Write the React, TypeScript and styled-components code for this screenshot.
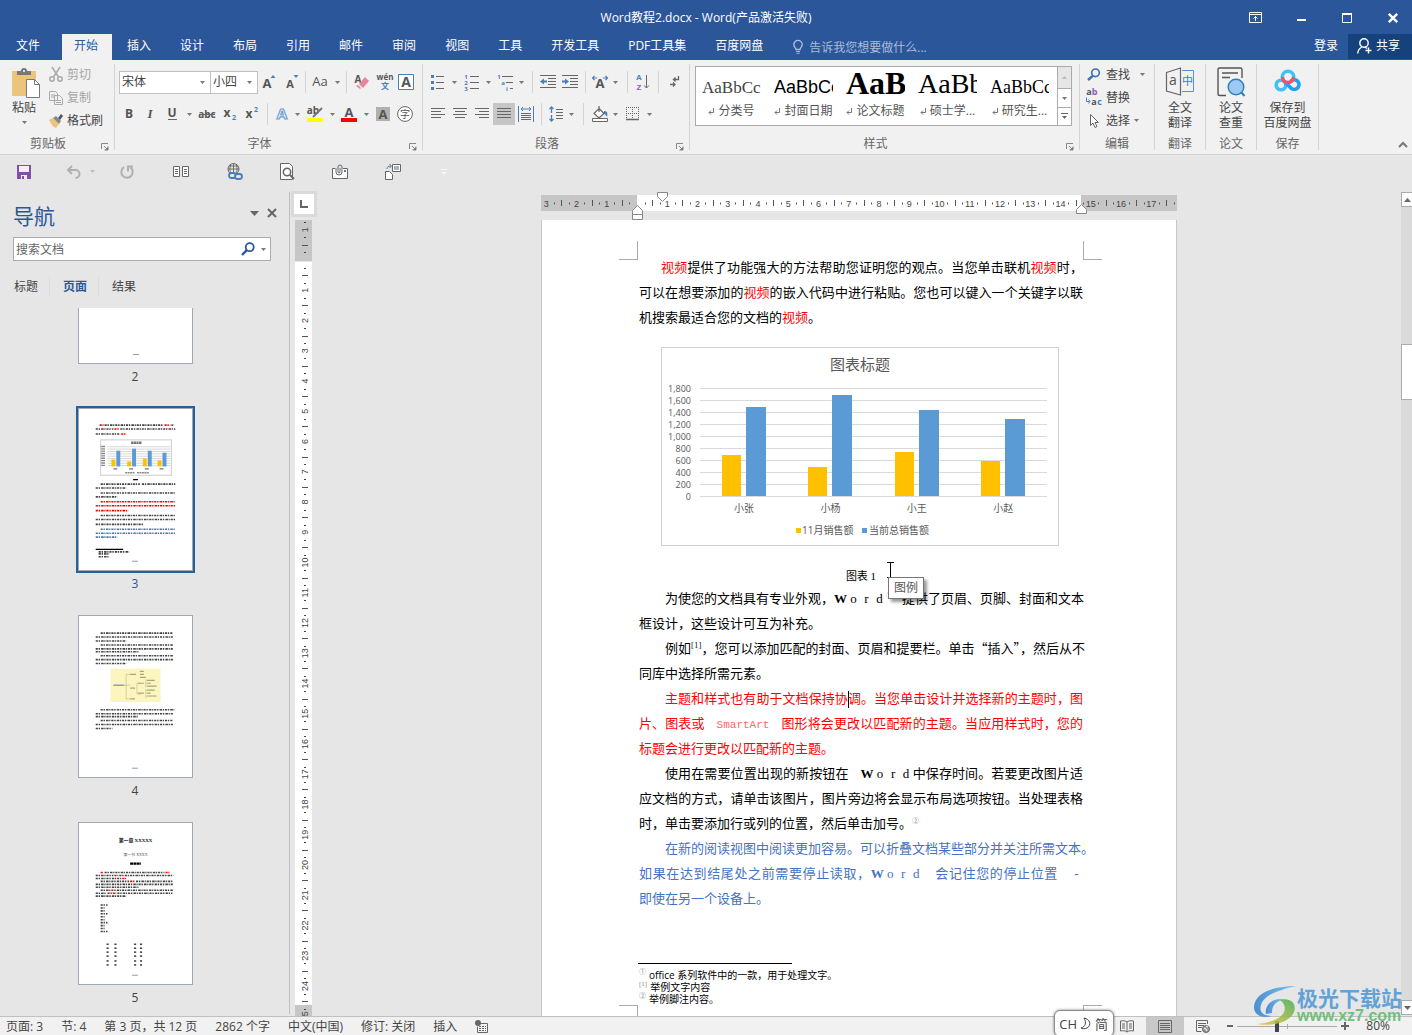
import React from "react";
import styled, { createGlobalStyle, css } from "styled-components";

const UI = `"Open Sans", "Noto Sans CJK SC", sans-serif`;
const BLUE = "#2b579a";

const Global = createGlobalStyle`
  * { box-sizing: border-box; }
  body { margin: 0; background: #e6e6e6; font: 12px/16px ${UI}; color: #444; overflow: hidden; }
  button, input, select { font: inherit; color: inherit; }
  button { border: 0; padding: 0; background: none; display: flex; align-items: center; justify-content: center; white-space: nowrap; }
  svg { display: block; flex: none; }
  h1, h2, p, ul { margin: 0; padding: 0; font-weight: 400; }
`;

const Shell = styled.div`
  position: relative;
  height: 100vh;
  display: flex;
  flex-direction: column;
  overflow: hidden;
`;

/* ---------- title bar and tabs ---------- */
const TitleBar = styled.header`
  height: 34px;
  flex: none;
  display: grid;
  grid-template-columns: 1fr auto 1fr;
  align-items: center;
  background: ${BLUE};
  color: #fff;
  h1 { font-size: 12px; line-height: 34px; padding-top: 1px; }
`;
const WindowButtons = styled.div`
  display: flex;
  justify-content: flex-end;
  button { width: 46px; height: 32px; }
  button:last-child { width: 42px; padding-left: 4px; }
`;
const TabBar = styled.nav`
  height: 26px;
  flex: none;
  display: flex;
  align-items: stretch;
  background: ${BLUE};
  color: #fff;
`;
const Tabs = styled.div`
  display: flex;
  gap: 3px;
  margin-left: 4px;
`;
const Tab = styled.button<{ $active?: boolean; $file?: boolean }>`
  padding: 0 14px 2px 12px;
  ${(p) => p.$file && css`padding-right: 19px;`}
  ${(p) => p.$active && css`background: #f1f1f1; color: ${BLUE};`}
`;
const TellMe = styled.label`
  display: flex;
  align-items: center;
  gap: 6px;
  margin-left: 16px;
  flex: 1;
  input { border: 0; background: none; padding: 0; width: 160px; height: 20px; outline: 0; }
  input::placeholder { color: #a9bcd9; opacity: 1; }
`;
const Login = styled.button`
  padding: 0 10px 2px;
`;
const Share = styled.button`
  width: 64px;
  height: 25px;
  gap: 4px;
  padding: 0 10px 2px 7px;
  background: #15417c;
`;

/* ---------- ribbon ---------- */
const Ribbon = styled.section`
  height: 95px;
  flex: none;
  display: flex;
  align-items: stretch;
  padding: 4px 0;
  background: #f1f1f1;
  border-bottom: 1px solid #d2d2d2;
`;
const Group = styled.div<{ $w: number }>`
  width: ${(p) => p.$w}px;
  flex: none;
  display: flex;
  flex-direction: column;
  border-right: 1px solid #d4d4d4;
`;
const GroupBody = styled.div<{ $pad?: number; $row?: boolean }>`
  flex: 1;
  display: flex;
  flex-direction: ${(p) => (p.$row ? "row" : "column")};
  padding-left: ${(p) => p.$pad ?? 0}px;
`;
const GroupLabel = styled.div`
  height: 16px;
  margin-bottom: -2px;
  display: flex;
  align-items: center;
  text-align: center;
  white-space: nowrap;
  color: #666;
  span { flex: 1; }
  button { align-self: flex-end; width: 18px; height: 10px; }
`;
const ToolRow = styled.div<{ $top: number }>`
  display: flex;
  align-items: center;
  height: 24px;
  margin-top: ${(p) => p.$top}px;
`;
const Tool = styled.button<{ $w: number; $on?: boolean }>`
  width: ${(p) => p.$w}px;
  height: 22px;
  flex: none;
  background: ${(p) => (p.$on ? "#c6c6c6" : "none")};
`;
const Sep = styled.span<{ $w: number }>`
  width: ${(p) => p.$w}px;
  height: 22px;
  flex: none;
  background: linear-gradient(#d4d4d4, #d4d4d4) center / 1px 100% no-repeat;
`;
const PickWrap = styled.label<{ $w: number }>`
  width: ${(p) => p.$w}px;
  height: 23px;
  flex: none;
  display: flex;
  align-items: center;
  margin-right: -1px;
  padding-right: 5px;
  border: 1px solid #c0c0c0;
  background: #fff;
  select {
    appearance: none;
    flex: 1;
    min-width: 0;
    height: 20px;
    border: 0;
    padding: 0 2px;
    background: none;
    outline: 0;
  }
`;
const PasteButton = styled.button`
  width: 28px;
  margin-left: 12px;
  flex-direction: column;
  justify-content: flex-start;
  padding-top: 4px;
  span { margin: 2px 4px 5px 0; }
  svg + span + svg { margin-right: 4px; }
`;
const SmallList = styled.div<{ $left: number }>`
  display: flex;
  flex-direction: column;
  margin-left: ${(p) => p.$left}px;
`;
const SmallButton = styled.button<{ $dim?: boolean }>`
  height: 23px;
  justify-content: flex-start;
  gap: 4px;
  color: ${(p) => (p.$dim ? "#a6a6a6" : "#444")};
  &:first-child { margin-top: -1px; }
`;
const BigButton = styled.button`
  width: 100%;
  flex-direction: column;
  justify-content: flex-start;
  padding-top: 3px;
  line-height: 15px;
  svg { margin-bottom: 3px; }
`;
const Gallery = styled.div`
  display: flex;
  width: 377px;
  height: 60px;
  margin: 2px 0 0 5px;
  border: 1px solid #ababab;
  background: #fff;
`;
const StyleCards = styled.div`
  flex: 1;
  display: grid;
  grid-template-columns: repeat(5, 72px);
  padding-left: 1px;
`;
const StyleCard = styled.button`
  height: 58px;
  flex-direction: column;
  justify-content: flex-start;
  align-items: stretch;
  padding: 0 8px 0 5px;
  color: #555;
`;
const Sample = styled.span<{ $size: number; $face: string; $bold?: boolean; $soft?: boolean }>`
  display: block;
  height: 36px;
  overflow: hidden;
  text-align: left;
  font: ${(p) => (p.$bold ? 700 : 400)} ${(p) => p.$size}px/1 ${(p) => p.$face};
  color: ${(p) => (p.$soft ? "#444" : "#000")};
  &::before { content: ""; display: inline-block; height: 26px; }
`;
const StyleName = styled.span`
  display: flex;
  align-items: center;
  justify-content: center;
  gap: 4px;
`;
const GalleryScroll = styled.div`
  width: 15px;
  display: grid;
  grid-template-rows: 21px 19px 18px;
  border-left: 1px solid #ababab;
  button + button { border-top: 1px solid #ababab; }
  button:first-child { background: #e6e6e6; }
`;
const Collapse = styled.button`
  margin: 0 4px 2px auto;
  align-self: flex-end;
`;

const QuickBar = styled.div`
  height: 35px;
  flex: none;
  display: flex;
  align-items: center;
  padding-bottom: 2px;
`;
const QuickButton = styled.button<{ $w: number; $split?: boolean }>`
  width: ${(p) => p.$w}px;
  height: 24px;
  ${(p) => p.$split && css`justify-content: flex-start; gap: 8px; padding-left: 18px;`}
`;

/* ---------- workspace ---------- */
const Workspace = styled.main`
  flex: 1;
  min-height: 0;
  display: flex;
`;
const NavPane = styled.aside`
  width: 290px;
  flex: none;
  display: flex;
  flex-direction: column;
  margin: 2px 0;
  border-right: 1px solid #c0c0c0;
`;
const NavHead = styled.div`
  height: 45px;
  display: flex;
  align-items: center;
  gap: 8px;
  padding: 0 12px 3px 13px;
  h2 { flex: 1; font-size: 21px; line-height: 28px; color: ${BLUE}; padding-top: 5px; }
`;
const SearchBox = styled.div`
  height: 24px;
  margin: 0 18px 0 13px;
  display: flex;
  align-items: center;
  gap: 6px;
  padding: 0 4px 0 2px;
  border: 1px solid #ababab;
  background: #fff;
  input { flex: 1; min-width: 0; height: 20px; padding: 0; border: 0; outline: 0; background: none; }
  input::placeholder { color: #666; opacity: 1; }
`;
const NavTabs = styled.div`
  display: flex;
  margin: 16px 0 11px 14px;
`;
const NavTab = styled.button<{ $on?: boolean }>`
  width: 49px;
  height: 20px;
  justify-content: flex-start;
  background: linear-gradient(#dcdcdc, #dcdcdc) 35px 0 / 1px 100% no-repeat;
  color: ${(p) => (p.$on ? BLUE : "#444")};
  font-weight: ${(p) => (p.$on ? 700 : 400)};
  &:last-child { background: none; }
`;
const ThumbList = styled.ul`
  flex: 1;
  min-height: 0;
  overflow: hidden;
  list-style: none;
  padding-right: 19px;
`;
const Thumb = styled.li<{ $on?: boolean }>`
  display: flex;
  flex-direction: column;
  align-items: center;
  height: 207px;
  color: ${(p) => (p.$on ? BLUE : "#444")};
  line-height: 26px;
  &:first-child { height: 100px; }
`;
const ThumbPage = styled.div<{ $on?: boolean; $cut?: boolean }>`
  width: 115px;
  height: ${(p) => (p.$cut ? 56 : 163)}px;
  flex: none;
  border: 1px solid #a0a8b4;
  background: #fff;
  ${(p) => p.$cut && css`border-top: 0; display: flex; align-items: flex-end;`}
  ${(p) => p.$on && css`outline: 2px solid #2a6099;`}
`;
const RulerColumn = styled.div`
  width: 27px;
  flex: none;
  display: flex;
  flex-direction: column;
  align-items: flex-start;
  overflow: hidden;
  padding-left: 1px;
`;
const TabStop = styled.button`
  width: 26px;
  height: 26px;
  margin: 1px 0 3px;
  border: 3px solid #dadada;
  background: #fff;
  flex: none;
`;
const RulerClip = styled.div`
  margin-left: 4px;
  flex: 1;
  min-height: 0;
  overflow: hidden;
`;
const Canvas = styled.section`
  flex: 1;
  min-width: 0;
  display: flex;
  flex-direction: column;
  align-items: center;
  overflow: hidden;
`;
const Page = styled.article`
  position: relative;
  width: 636px;
  flex: 1;
  min-height: 0;
  padding: 34px 93px 0 97px;
  border: solid #c6c6c6;
  border-width: 0 1px;
  background: #fff;
  color: #000;
  overflow: hidden;
  font: 13px/25px "Liberation Serif", "Noto Sans CJK SC", serif;
`;
const Crop = styled.i<{ $x: "left" | "right"; $y: "top" | "bottom" }>`
  position: absolute;
  width: 19px;
  height: ${(p) => (p.$y === "top" ? 19 : 11)}px;
  ${(p) => (p.$x === "left" ? "left: 77px; border-right: 1px solid #aaa;" : "right: 74px; border-left: 1px solid #aaa;")}
  ${(p) => (p.$y === "top" ? "top: 21px; border-bottom: 1px solid #aaa;" : "bottom: 0; border-top: 1px solid #aaa;")}
`;
const Para = styled.p<{ $color?: string }>`
  font-family: "Noto Sans CJK SC", sans-serif;
  color: ${(p) => p.$color ?? "#000"};
`;
const Line = styled.span<{ $indent?: number; $full?: boolean }>`
  display: block;
  height: 25px;
  white-space: nowrap;
  padding-left: ${(p) => p.$indent ?? 0}px;
  text-align: left;
  text-align-last: ${(p) => (p.$full ? "justify" : "left")};
`;
const Red = styled.span`
  color: #f00;
`;
const Cell = styled.span`
  display: inline-block;
  width: 13px;
  text-align: center;
  text-align-last: center;
  font-family: "Liberation Serif", serif;
`;
const Blank = styled.span<{ $narrow?: boolean }>`
  display: inline-block;
  width: ${(p) => (p.$narrow ? 9 : 12)}px;
`;
const Mono = styled.span`
  font-family: "Liberation Mono", monospace;
  font-size: 11px;
  color: #f66;
`;
const Mark = styled.sup<{ $dark?: boolean }>`
  font-size: ${(p) => (p.$dark ? 9 : 7)}px;
  line-height: 0;
  color: ${(p) => (p.$dark ? "#222" : "#888")};
  font-family: "Liberation Serif", "Noto Sans CJK SC", serif;
`;
const TextCaret = styled.span`
  display: inline-block;
  width: 1px;
  height: 17px;
  margin-right: -1px;
  background: #000;
  vertical-align: middle;
`;
const Figure = styled.figure`
  margin: 18px 0 0;
  figcaption {
    margin-top: 21px;
    text-align: center;
    font-size: 11px;
    line-height: 18px;
  }
  svg { margin-left: 22px; }
`;
const Footnotes = styled.div`
  margin-top: 53px;
  font: 10px/12px "Open Sans", "Noto Sans CJK SC", sans-serif;
  &::before {
    content: "";
    display: block;
    width: 154px;
    margin: 0 0 5px -1px;
    border-top: 1px solid #000;
  }
  p { display: flex; gap: 3px; }
  sup { line-height: 7px; }
`;
const Tooltip = styled.div`
  position: absolute;
  left: 346px;
  top: 357px;
  padding: 0 5px;
  border: 1px solid #767676;
  background: #fff;
  box-shadow: 3px 3px 3px rgba(0, 0, 0, 0.4);
  font: 12px/20px ${UI};
  color: #575757;
`;
const Pointer = styled.svg`
  position: absolute;
  left: 344px;
  top: 342px;
`;
const ScrollBar = styled.div`
  width: 11px;
  flex: none;
  margin: 2px 0 1px;
  display: flex;
  flex-direction: column;
  background: #dadada;
  button { width: 14px; height: 15px; border: 1px solid #ababab; background: #fff; padding-right: 1px; }
`;
const ScrollSpace = styled.div<{ $grow: number }>`
  flex: ${(p) => p.$grow} 1 0;
`;
const ScrollThumb = styled.div`
  width: 14px;
  height: 56px;
  border: 1px solid #ababab;
  background: #fff;
`;

/* ---------- status bar ---------- */
const StatusBar = styled.footer`
  height: 19px;
  flex: none;
  display: flex;
  align-items: center;
  padding: 0 22px 0 6px;
  border-top: 1px solid #c0c0c0;
  background: #f1f1f1;
`;
const StatusItems = styled.div`
  flex: 1;
  display: flex;
  align-items: center;
  white-space: nowrap;
  padding-top: 1px;
  gap: 18px;
`;
const ViewButton = styled.button<{ $on?: boolean }>`
  width: 38px;
  height: 18px;
  background: ${(p) => (p.$on ? "#c8c8c8" : "none")};
`;
const ZoomStep = styled.button<{ $gap: number }>`
  width: 10px;
  height: 16px;
  margin-left: ${(p) => p.$gap}px;
`;
const ZoomRange = styled.input`
  appearance: none;
  width: 100px;
  height: 12px;
  margin: 0 -3px 0 2px;
  background:
    linear-gradient(#aaa, #aaa) 50% 50% / 1px 5px no-repeat,
    linear-gradient(#aaa, #aaa) 0 50% / 100% 1px no-repeat;
  &::-webkit-slider-thumb { appearance: none; width: 4px; height: 11px; background: #444; }
`;
const ZoomValue = styled.span`
  width: 40px;
  text-align: right;
`;
const Ime = styled.div`
  position: absolute;
  right: 298px;
  bottom: -2px;
  height: 27px;
  display: flex;
  align-items: center;
  gap: 3px;
  padding: 0 5px 0 4px;
  border: 1px solid #8c8c8c;
  border-radius: 6px;
  background: #fff;
  box-shadow: 0 0 3px rgba(0, 0, 0, 0.5);
  font-size: 13px;
`;
const Watermark = styled.div`
  position: absolute;
  right: 10px;
  bottom: 8px;
  display: flex;
  align-items: center;
  opacity: 0.85;
  div { display: flex; flex-direction: column; }
  strong { font: 700 21px/20px "Noto Sans CJK SC", sans-serif; color: #4b97d6; }
  em { font: 700 16px/18px "Liberation Sans", sans-serif; color: #5cba6c; }
`;

/* ---------- icons ---------- */
const G = "#666";
const B = "#4a7fb5";
const Svg = ({ w = 16, h = 16, children, ...rest }: any) => (
  <svg width={w} height={h} viewBox={`0 0 ${w} ${h}`} fill="none" stroke={G} overflow="visible" aria-hidden="true" {...rest}>
    {children}
  </svg>
);
const Caret = ({ c = "#777" }: { c?: string }) => (
  <Svg w={5} h={3} stroke="none"><path d="M0 0h5L2.500 3z" fill={c} /></Svg>
);
const CaretTool = ({ w, label }: { w: number; label: string }) => (
  <Tool $w={w} aria-label={label}><Caret /></Tool>
);
const T = ({ x, y, s, f = "#555", b, i, children, face = "Open Sans" }: any) => (
  <text x={x} y={y} fontSize={s} fill={f} stroke="none" fontWeight={b ? 700 : 400} fontStyle={i ? "italic" : "normal"} fontFamily={face} textAnchor="middle">{children}</text>
);
const Launcher = () => (
  <button aria-label="更多选项">
    <Svg w={8} h={8} stroke="#888"><path d="M.5 6V.5H7M3 3l3 3M7 3.500V7H3.500" /><path d="M7 4v3H4z" fill="#777" stroke="none" /></Svg>
  </button>
);
const Lines = ({ rows }: { rows: number[][] }) => (
  <Svg w={16} h={14}>{rows.map(([x1, x2], i) => <path key={i} d={`M${x1} ${1.5 + i * 3}H${x2}`} />)}</Svg>
);
const Magnifier = ({ c = "#3c6fb0", s = 14 }: { c?: string; s?: number }) => (
  <svg width={s} height={s} viewBox="0 0 14 14" fill="none" stroke={c} aria-hidden="true">
    <circle cx="8.700" cy="5.200" r="4" strokeWidth="1.800" /><path d="M5.800 8.200L1 13" strokeWidth="2.400" />
  </svg>
);

/* ---------- rulers ---------- */
const CM = 30.25;
const HRuler = () => {
  const marks: React.ReactNode[] = [];
  for (let q = -12; q <= 71; q++) {
    const x = 96 + (q * CM) / 4;
    if (q % 4 === 0) {
      if (q !== 0) marks.push(<text key={q} x={x} y={17} textAnchor="middle">{Math.abs(q / 4)}</text>);
    } else if (q % 2 === 0) marks.push(<path key={q} d={`M${Math.round(x)}.5 10v6`} stroke="#555" />);
    else marks.push(<path key={q} d={`M${Math.round(x)} 13.500h1`} stroke="#555" strokeWidth="2" />);
  }
  return (
    <svg width="636" height="30" viewBox="0 0 636 30" fontFamily="Liberation Sans" fontSize="9" fill="#444" aria-hidden="true">
      <path d="M0 5h96v16H0zM540 5h96v16h-96z" fill="#c6c6c6" /><path d="M96 5h444v16H96z" fill="#fff" />
      {marks}
      <g fill="#fff" stroke="#888"><path d="M116.500 2.500h10v4l-5 5-5-5z" /><path d="M91.500 24.500v-4l5-5 5 5v4zM91.500 24.500h10v5h-10z" /><path d="M535.500 23.500v-4l5-5 5 5v4z" /></g>
    </svg>
  );
};
const VRuler = () => {
  const marks: React.ReactNode[] = [];
  for (let q = -5; q <= 100; q++) {
    const y = 40 + (q * CM) / 4;
    if (q % 4 === 0) {
      if (q !== 0) marks.push(<text key={q} transform={`translate(13 ${y}) rotate(-90)`} textAnchor="middle">{Math.abs(q / 4)}</text>);
    } else if (q % 2 === 0) marks.push(<path key={q} d={`M7 ${Math.round(y)}.5h6`} stroke="#555" />);
    else marks.push(<path key={q} d={`M9 ${Math.round(y)}.5h2`} stroke="#444" />);
  }
  return (
    <svg width="17" height="830" viewBox="0 0 17 830" fontFamily="Liberation Sans" fontSize="9" fill="#444" aria-hidden="true">
      <path d="M0 0h17v41H0zM0 785h17v45H0z" fill="#c6c6c6" /><path d="M0 42h17v743H0z" fill="#fff" />
      {marks}
    </svg>
  );
};

/* ---------- chart ---------- */
const sales = [
  { name: "小张", nov: 700, total: 1500 },
  { name: "小杨", nov: 500, total: 1700 },
  { name: "小王", nov: 750, total: 1450 },
  { name: "小赵", nov: 600, total: 1300 },
];
const Chart = () => (
  <svg width="398" height="199" viewBox="0 0 398 199" fontFamily="Open Sans, Noto Sans CJK SC" fill="#595959" role="img" aria-label="图表标题">
    <rect x=".5" y=".5" width="397" height="198" fill="#fff" stroke="#d0d0d0" />
    <text x="199" y="23" fontSize="15" textAnchor="middle">图表标题</text>
    {[...Array(10)].map((_, i) => (
      <g key={i}>
        <path d={`M39 ${149.5 - i * 12}h347`} stroke="#d9d9d9" />
        <text x="30" y={153 - i * 12} fontSize="9" textAnchor="end">{(i * 200).toLocaleString("en-US")}</text>
      </g>
    ))}
    {sales.map((d, i) => {
      const x = 61 + i * 86.4;
      return (
        <g key={d.name} shapeRendering="crispEdges">
          <rect x={x} y={150 - d.nov * 0.06} width="19" height={d.nov * 0.06 - 1} fill="#ffc000" />
          <rect x={x + 24} y={150 - d.total * 0.06} width="20" height={d.total * 0.06 - 1} fill="#5b9bd5" />
          <text x={x + 22} y="165" fontSize="10" textAnchor="middle">{d.name}</text>
        </g>
      );
    })}
    <rect x="135" y="181" width="5" height="5" fill="#ffc000" /><text x="141" y="187" fontSize="10">11月销售额</text>
    <rect x="201" y="181" width="5" height="5" fill="#5b9bd5" /><text x="208" y="187" fontSize="10">当前总销售额</text>
  </svg>
);

/* ---------- page thumbnails ---------- */
type Row = [number, number, number, string?];
const Scribble = ({ rows }: { rows: Row[] }) => (
  <g strokeWidth="1.600" strokeDasharray="2.200 .8 1.400 1.100 2.600 .7 1.200 .9">
    {rows.map(([x1, x2, y, c], i) => <path key={i} d={`M${x1} ${y}H${x2}`} stroke={c ?? "#444"} />)}
  </g>
);
const R = "#f00";
const L = "#4472c4";
const page3: Row[] = [
  [21, 25, 16, R], [26, 86, 16], [87, 93, 16, R], [94, 96, 16], [17, 35, 20], [36, 41, 20, R], [42, 98, 20], [17, 42, 25], [43, 48, 25, R],
  [22, 62, 76], [64, 98, 76], [17, 48, 80], [22, 98, 85], [17, 39, 89], [22, 98, 94, R], [17, 98, 98, R], [17, 50, 103, R],
  [22, 98, 108], [17, 98, 112], [17, 66, 117], [22, 98, 122, L], [17, 98, 126, L], [17, 39, 130, L], [20, 51, 145], [20, 31, 147], [20, 31, 150],
];
const page4: Row[] = [
  [22, 95, 17], [17, 96, 21], [17, 48, 25], [22, 96, 29], [17, 96, 33], [17, 61, 36], [22, 96, 40], [17, 96, 44], [17, 48, 48],
  [22, 97, 95], [17, 96, 99], [17, 60, 102], [22, 95, 106], [17, 96, 110], [17, 34, 114],
];
const page5: Row[] = [
  [22, 25, 50, R], [26, 87, 50], [88, 92, 50, R], [17, 35, 53], [36, 40, 53, R], [41, 96, 53], [17, 43, 56], [44, 48, 56, R],
  [22, 51, 59], [52, 57, 59, R], [58, 95, 59], [17, 96, 62], [17, 61, 65], [22, 96, 68], [17, 28, 71], [29, 38, 71, R], [39, 95, 71], [17, 48, 74],
  ...[83, 86, 89, 92, 95, 98, 101, 104, 107, 110].map((y, i): Row => [22, i % 3 ? 26 : 29, y]),
  ...[123, 127, 131, 135, 140, 144].flatMap((y): Row[] => [[28, 31, y], [36, 39, y], [56, 59, y], [62, 65, y]]),
];
const PageNo = () => <path d="M54 154.500h6" stroke="#999" />;
const MiniPage = ({ children }: { children: React.ReactNode }) => (
  <svg width="113" height="161" viewBox="0 0 115 163" fill="none" aria-hidden="true">{children}<PageNo /></svg>
);
const Mini3 = () => (
  <MiniPage>
    <Scribble rows={page3} />
    <rect x="22" y="31" width="72" height="36" stroke="#ccc" fill="#fff" />
    <path d="M53 34h11" stroke="#777" strokeWidth="2.500" strokeDasharray="2.300 .4" />
    {[0, 1, 2, 3, 4, 5, 6, 7, 8].map((i) => <path key={i} d={`M29 ${38 + i * 2.4}h64`} stroke="#ccc" strokeWidth=".8" />)}
    <path d="M24.500 37v21" stroke="#888" strokeWidth="4" strokeDasharray="1.400 1" />
    {[[33, 7, 16], [49, 5, 18], [65, 8, 16], [80, 6, 14]].map(([x, a, b]) => (
      <g key={x}><path d={`M${x} ${58 - a}h4v${a}h-4z`} fill="#ffc000" /><path d={`M${x + 5} ${58 - b}h4v${b}h-4z`} fill="#5b9bd5" /><path d={`M${x + 2} 60.500h4`} stroke="#888" strokeWidth="1.500" /></g>
    ))}
    <path d="M47 64.500h10M59 64.500h12" stroke="#888" strokeDasharray="2 .5" strokeWidth="1.500" />
    <path d="M55 71.500h5M17 142.500h28" stroke="#000" strokeWidth="1.200" />
  </MiniPage>
);
const Mini4 = () => (
  <MiniPage>
    <Scribble rows={page4} />
    <path d="M32 53h51v34H32z" fill="#fdf5bf" />
    <path d="M48 70V59h4M48 70v14h4M46 70h6M59 74V68h4M59 74v5h4M68 64v8M68 74v9" stroke="#b8b38a" strokeWidth=".6" />
    <path d="M35 70h11" stroke="#99a" strokeWidth="1.500" />
    <path d="M52 59h6M52 73h5M52 84h5M60 68h6M60 78h6M62 56h4M62 59h4M62 62h6M69 65h8M69 68h4M69 71h10M69 75h8M69 78h4M69 81h10" stroke="#a8a67f" strokeWidth="1.200" />
  </MiniPage>
);
const Mini5 = () => (
  <MiniPage>
    <T x={57.5} y={19} s={5} f="#111" b face="Liberation Serif, Noto Sans CJK SC">第一章 XXXXX</T>
    <T x={57.5} y={33.5} s={4} f="#555" face="Liberation Serif, Noto Sans CJK SC">第一节 XXXX</T>
    <path d="M52 41h11" stroke="#000" strokeWidth="2.200" strokeDasharray="3 .4" />
    <Scribble rows={page5} />
  </MiniPage>
);

const Word = () => (
  <><Cell><b>W</b></Cell><Cell>o</Cell><Cell>r</Cell><Cell>d</Cell></>
);

const styles = [
  { name: "分类号", s: "AaBbCc", size: 17, face: `"Liberation Serif"`, soft: true },
  { name: "封面日期", s: "AaBbCc", size: 18, face: `"Liberation Sans"` },
  { name: "论文标题", s: "AaB", size: 32, face: `"Liberation Serif"`, bold: true },
  { name: "硕士学...", s: "AaBb", size: 28, face: `"Liberation Serif"` },
  { name: "研究生...", s: "AaBbCc", size: 18, face: `"Liberation Serif"` },
];

export default function App() {
  return (
    <Shell lang="zh-CN">
      <Global />
      <TitleBar>
        <span />
        <h1>Word教程2.docx - Word(产品激活失败)</h1>
        <WindowButtons>
          <button aria-label="功能区显示选项"><Svg w={13} h={11} stroke="#fff"><path d="M.5.5h12v10H.5zM.5 2.500h12M6.500 9V4.500M4.500 6.500l2-2 2 2" /></Svg></button>
          <button aria-label="最小化"><Svg w={9} h={10} stroke="#fff"><path d="M0 7h9" strokeWidth="2" /></Svg></button>
          <button aria-label="最大化"><Svg w={10} h={10} stroke="#fff"><path d="M.5 1.500h9v8h-9z" /><path d="M0 1h10" strokeWidth="2" /></Svg></button>
          <button aria-label="关闭"><Svg w={10} h={10} stroke="#fff"><path d="M.8.8l8.400 8.400M9.200.8L.8 9.200" strokeWidth="2.400" /></Svg></button>
        </WindowButtons>
      </TitleBar>
      <TabBar>
        <Tabs>
          <Tab $file>文件</Tab>
          <Tab $active>开始</Tab>
          {["插入", "设计", "布局", "引用", "邮件", "审阅", "视图", "工具", "开发工具", "PDF工具集", "百度网盘"].map((t) => <Tab key={t}>{t}</Tab>)}
        </Tabs>
        <TellMe>
          <Svg w={10} h={14} stroke="#a9bcd9"><path d="M3 9.500C3 8 .8 7 .8 4.600a4.200 4.200 0 0 1 8.400 0C9.200 7 7 8 7 9.500z" strokeWidth="1.400" /><path d="M3 11.500h4M3.500 13.300h3" /></Svg>
          <input aria-label="告诉我您想要做什么" placeholder="告诉我您想要做什么..." />
        </TellMe>
        <Login>登录</Login>
        <Share>
          <Svg w={15} h={16} stroke="#fff" strokeWidth="1.400"><circle cx="7" cy="5" r="4.200" /><path d="M.8 15.500c0-3 1.500-5 4-6.500M8 9l2 1.500M8.500 12.500h6M11.500 9.500v6" /></Svg>
          共享
        </Share>
      </TabBar>

      <Ribbon>
        <Group $w={115}>
          <GroupBody $row>
            <PasteButton>
              <Svg w={28} h={30} stroke="none">
                <path d="M0 3h24v25H0z" fill="#ecc57d" /><path d="M5 7V3h4a3 3 0 0 1 6 0h4v4z" fill="#777" /><circle cx="12" cy="3" r="1" fill="#fff" />
                <path d="M14.500 11.500h8l5 5v13h-13z" fill="#fff" stroke="#777" /><path d="M22.500 11.500v5h5" stroke="#777" />
              </Svg>
              <span>粘贴</span><Caret />
            </PasteButton>
            <SmallList $left={9}>
              <SmallButton $dim>
                <Svg w={14} h={15} stroke="#aaa" strokeWidth="1.500"><path d="M3 0l6.500 10M11 0L4.500 10" /><circle cx="3" cy="12" r="2.200" /><circle cx="11" cy="12" r="2.200" /></Svg>剪切
              </SmallButton>
              <SmallButton $dim>
                <Svg w={14} h={14} stroke="#aaa"><path d="M.5.5h6l2 2v7h-8zM2 4h4M2 6h4M5.500 4.500h5l3 3v6h-8zM7 9.500h5M7 11.500h5" fill="#f1f1f1" /></Svg>复制
              </SmallButton>
              <SmallButton>
                <Svg w={14} h={14} stroke="none"><path d="M0 6l4-2 6 6-3 4c-3-1-5-4-7-8z" fill="#ecc57d" /><path d="M4 4l3-2 5 5-2 3z" fill="#888" /><path d="M9 4l3-4 2 2-3 4z" fill="#555" /></Svg>格式刷
              </SmallButton>
            </SmallList>
          </GroupBody>
          <GroupLabel><span>剪贴板</span><Launcher /></GroupLabel>
        </Group>

        <Group $w={308}>
          <GroupBody $pad={4}>
            <ToolRow $top={6}>
              <PickWrap $w={92}><select aria-label="字体"><option>宋体</option></select><Caret /></PickWrap>
              <PickWrap $w={48}><select aria-label="字号"><option>小四</option></select><Caret /></PickWrap>
              <Tool $w={24} aria-label="增大字号"><Svg w={14} h={16}><T x={5} y={14} s={13} b>A</T><path d="M8.500 4h5L11 1z" fill={B} stroke="none" /></Svg></Tool>
              <Tool $w={22} aria-label="减小字号"><Svg w={14} h={16}><T x={5} y={14} s={11} b>A</T><path d="M8.500 1h5L11 4z" fill={B} stroke="none" /></Svg></Tool>
              <Sep $w={5} />
              <Tool $w={24} aria-label="更改大小写"><Svg w={18} h={16}><T x={9} y={12} s={13}>Aa</T></Svg></Tool>
              <CaretTool w={10} label="更改大小写选项" />
              <Sep $w={8} />
              <Tool $w={24} aria-label="清除所有格式"><Svg w={16} h={16}><T x={4} y={9} s={10} b>A</T><path d="M5 10l6-7 4 4-6 7z" fill="#e8859a" stroke="none" /><path d="M2 12l2-1 3 3-1 1z" fill="#e8859a" stroke="none" /></Svg></Tool>
              <Tool $w={21} aria-label="拼音指南"><Svg w={16} h={18}><T x={8} y={7} s={8} b>wén</T><T x={8} y={16} s={8} f={B} b face="Noto Sans CJK SC">文</T></Svg></Tool>
              <Tool $w={22} aria-label="字符边框"><Svg w={16} h={16}><path d="M.5.5h15v15H.5z" stroke={B} fill="#fff" /><T x={8} y={13} s={14} b>A</T></Svg></Tool>
            </ToolRow>
            <ToolRow $top={8}>
              <Tool $w={20} aria-label="加粗"><Svg><T x={8} y={12} s={12} b>B</T></Svg></Tool>
              <Tool $w={22} aria-label="倾斜"><Svg><T x={8} y={12} s={13} b i face="Liberation Serif">I</T></Svg></Tool>
              <Tool $w={22} aria-label="下划线"><Svg><T x={8} y={11} s={12} b>U</T><path d="M4 13.500h9" /></Svg></Tool>
              <CaretTool w={12} label="下划线选项" />
              <Tool $w={24} aria-label="删除线"><Svg w={18}><T x={9} y={12} s={10} b>abc</T><path d="M1 8.500h16" /></Svg></Tool>
              <Tool $w={22} aria-label="下标"><Svg><T x={5} y={11} s={12} b>x</T><T x={12} y={14} s={7} f={B} b>2</T></Svg></Tool>
              <Tool $w={21} aria-label="上标"><Svg><T x={5} y={12} s={12} b>x</T><T x={12} y={6} s={7} f={B} b>2</T></Svg></Tool>
              <Sep $w={10} />
              <Tool $w={20} aria-label="文本效果"><Svg w={16} h={18}><text x="8" y="14" fontSize="15" fontWeight="700" textAnchor="middle" fontFamily="Open Sans" fill="#fff" stroke="#6ea0d6" strokeWidth="1.200">A</text></Svg></Tool>
              <CaretTool w={10} label="文本效果选项" />
              <Tool $w={26} aria-label="突出显示"><Svg w={17} h={18}><T x={6} y={9} s={10} b>ab</T><path d="M15 3L9 9l-3 3" strokeWidth="2" stroke="#777" /><path d="M0 13h16v4H0z" fill="#ff0" stroke="none" /></Svg></Tool>
              <CaretTool w={8} label="突出显示选项" />
              <Tool $w={26} aria-label="字体颜色"><Svg w={16} h={18}><T x={8} y={12} s={13} b>A</T><path d="M0 13h16v4H0z" fill="#f00" stroke="none" /></Svg></Tool>
              <CaretTool w={8} label="字体颜色选项" />
              <Tool $w={26} aria-label="字符底纹"><Svg w={14} h={14}><path d="M0 0h14v14H0z" fill="#b0b0b0" stroke="none" /><T x={7} y={12} s={13} b>A</T></Svg></Tool>
              <Tool $w={18} aria-label="带圈字符"><Svg w={16} h={16}><circle cx="8" cy="8" r="7.400" fill="#fff" /><T x={8} y={12} s={10} face="Noto Sans CJK SC">字</T></Svg></Tool>
            </ToolRow>
          </GroupBody>
          <GroupLabel><span>字体</span><Launcher /></GroupLabel>
        </Group>

        <Group $w={267}>
          <GroupBody $pad={4}>
            <ToolRow $top={6}>
              <Tool $w={21} aria-label="项目符号"><Svg w={14} h={14}><path d="M5 1.500h8M5 7.500h8M5 13.500h8" /><path d="M0 0h3v3H0zM0 6h3v3H0zM0 12h3v3H0z" fill={B} stroke="none" /></Svg></Tool>
              <CaretTool w={12} label="项目符号选项" />
              <Tool $w={24} aria-label="编号"><Svg w={16} h={16}><path d="M6 2.500h9M6 8.500h9M6 14.500h9" /><T x={2} y={4.5} s={6} f={B} b>1</T><T x={2} y={10.5} s={6} f={B} b>2</T><T x={2} y={16.5} s={6} f={B} b>3</T></Svg></Tool>
              <CaretTool w={8} label="编号选项" />
              <Tool $w={26} aria-label="多级列表"><Svg w={17} h={16}><path d="M5 2.500h11M9 8.500h7M13 14.500h3" /><T x={2} y={5} s={6} f={B} b>1</T><T x={6} y={10.5} s={6} f={B} b>a</T><T x={10} y={16.5} s={6} f={B} b>i</T></Svg></Tool>
              <CaretTool w={6} label="多级列表选项" />
              <Sep $w={16} />
              <Tool $w={16} aria-label="减少缩进"><Svg w={16} h={14}><path d="M0 .5h16M8 3.500h8M8 6.500h8M8 9.500h8M0 12.500h16" /><path d="M0 6.500l4-3v2h3v2H4v2z" fill={B} stroke="none" /></Svg></Tool>
              <Tool $w={27} aria-label="增加缩进"><Svg w={16} h={14}><path d="M0 .5h16M8 3.500h8M8 6.500h8M8 9.500h8M0 12.500h16" /><path d="M7 6.500l-4-3v2H0v2h3v2z" fill={B} stroke="none" /></Svg></Tool>
              <Sep $w={5} />
              <Tool $w={24} aria-label="中文版式"><Svg w={16} h={14}><T x={8} y={13} s={13} b>A</T><path d="M0 3h5M2.500.8L.5 3l2 2.200M16 3h-5M13.500.8l2 2.200-2 2.200" stroke={B} strokeWidth="1.200" /></Svg></Tool>
              <CaretTool w={6} label="中文版式选项" />
              <Sep $w={18} />
              <Tool $w={14} aria-label="排序"><Svg w={14} h={16}><T x={3} y={6} s={8} f={B} b face="Liberation Sans">A</T><T x={3} y={16} s={8} f="#8b5bb5" b face="Liberation Sans">Z</T><path d="M10.500 1v13M8 11.500l2.500 2.500 2.500-2.500" /></Svg></Tool>
              <Sep $w={16} />
              <Tool $w={18} aria-label="显示编辑标记"><Svg w={12} h={14}><path d="M9.500 1v3.500h-5M6.500 2.500l-2 2 2 2M1 9.500h5M4 7.500l2 2-2 2" strokeWidth="1.300" /></Svg></Tool>
            </ToolRow>
            <ToolRow $top={8}>
              <Tool $w={22} aria-label="左对齐"><Lines rows={[[1, 15], [1, 11], [1, 15], [1, 11]]} /></Tool>
              <Tool $w={22} aria-label="居中"><Lines rows={[[1, 15], [3, 13], [1, 15], [3, 13]]} /></Tool>
              <Tool $w={22} aria-label="右对齐"><Lines rows={[[1, 15], [5, 15], [1, 15], [5, 15]]} /></Tool>
              <Tool $w={22} $on aria-label="两端对齐"><Lines rows={[[1, 15], [1, 15], [1, 15], [1, 15]]} /></Tool>
              <Tool $w={22} aria-label="分散对齐"><Svg w={16} h={16}><path d="M.5 0v16M15.500 0v16M3 3h10M5 1L3 3l2 2M11 1l2 2-2 2" stroke={B} /><path d="M3 7.500h10M3 9.500h10M3 11.500h10M3 13.500h10" /></Svg></Tool>
              <Sep $w={8} />
              <Tool $w={22} aria-label="行距"><Svg w={16} h={16}><path d="M3.500 1v6M1.500 3l2-2 2 2M3.500 9v6M1.500 13l2 2 2-2" stroke={B} strokeWidth="1.300" /><path d="M8 3.500h7M8 6.500h7M8 9.500h7M8 12.500h7" /></Svg></Tool>
              <CaretTool w={8} label="行距选项" />
              <Sep $w={16} />
              <Tool $w={18} aria-label="底纹"><Svg w={17} h={16}><path d="M7 2.500l5 5-5 4.500-5-4.500zM7 6V0" fill="#fff" strokeWidth="1.200" /><path d="M12 5c3 0 4 2 3 6-1-2-2-3-3-3z" fill={B} stroke="none" /><path d="M.5 12.500h15v3H.5z" fill="#fff" /></Svg></Tool>
              <CaretTool w={12} label="底纹选项" />
              <Tool $w={24} aria-label="边框"><Svg w={14} h={14}><path d="M.5 0v12M6.500 0v12M12.500 0v12M0 .5h13M0 6.500h13" strokeDasharray="1 1" /><path d="M0 12.500h13" strokeWidth="1.500" /></Svg></Tool>
              <CaretTool w={8} label="边框选项" />
            </ToolRow>
          </GroupBody>
          <GroupLabel><span>段落</span><Launcher /></GroupLabel>
        </Group>

        <Group $w={390}>
          <GroupBody>
            <Gallery>
              <StyleCards>
                {styles.map((s) => (
                  <StyleCard key={s.name}>
                    <Sample $size={s.size} $face={s.face} $bold={s.bold} $soft={s.soft}>{s.s}</Sample>
                    <StyleName>
                      <Svg w={6} h={7} stroke="#777"><path d="M5.500 0v4.500H1M3 2.500l-2 2 2 2" /></Svg>{s.name}
                    </StyleName>
                  </StyleCard>
                ))}
              </StyleCards>
              <GalleryScroll>
                <button aria-label="上一行"><Svg w={5} h={3} stroke="none"><path d="M0 3h5L2.500 0z" fill="#bbb" /></Svg></button>
                <button aria-label="下一行"><Caret /></button>
                <button aria-label="其他"><Svg w={7} h={7}><path d="M0 .5h7" /><path d="M1 3h5L3.500 6z" fill={G} stroke="none" /></Svg></button>
              </GalleryScroll>
            </Gallery>
          </GroupBody>
          <GroupLabel><span>样式</span><Launcher /></GroupLabel>
        </Group>

        <Group $w={75}>
          <GroupBody>
            <SmallList $left={6}>
              <SmallButton><Svg w={16}><g transform="translate(1 1)" stroke="#3c6fb0"><circle cx="8.500" cy="4.800" r="3.800" strokeWidth="1.600" /><path d="M5.800 7.800L1 12" strokeWidth="2.400" /></g></Svg>查找&nbsp;&nbsp;<Caret /></SmallButton>
              <SmallButton><Svg w={16} h={18}><T x={3} y={6} s={9} b>a</T><T x={8.5} y={6} s={9} f="#8b5bb5" b>b</T><path d="M.5 8.500v4h3M2.500 10.500l1.500 2-1.500 2" stroke={B} /><T x={8} y={16} s={9} b>a</T><T x={13.5} y={16} s={9} f={B} b>c</T></Svg>替换</SmallButton>
              <SmallButton><Svg w={16}><path d="M4.500 1.500v11l2.500-2.500 2 4.500 2-1-2-4h3.500z" fill="#fff" /></Svg>选择<Caret /></SmallButton>
            </SmallList>
          </GroupBody>
          <GroupLabel><span>编辑</span></GroupLabel>
        </Group>

        <Group $w={51}>
          <GroupBody>
            <BigButton>
              <Svg w={30} h={30}><path d="M1.500 5.500l14-4.500v27l-14-4z" strokeWidth="1.200" /><T x={8} y={18} s={14}>a</T><path d="M17 3.500h11.500v21H17" stroke="#5b8fd6" /><T x={22.5} y={18} s={11} f="#3b7bd0" face="Noto Sans CJK SC">中</T></Svg>
              <span>全文</span><span>翻译</span>
            </BigButton>
          </GroupBody>
          <GroupLabel><span>翻译</span></GroupLabel>
        </Group>
        <Group $w={51}>
          <GroupBody>
            <BigButton>
              <Svg w={30} h={30}><path d="M10 28.500H3.500a1.500 1.500 0 0 1-1.500-1.500V2.500A1.500 1.500 0 0 1 3.500 1h21A1.500 1.500 0 0 1 26 2.500V11" strokeWidth="1.400" stroke="#555" /><path d="M6 6h16M6 10.500h8" strokeWidth="1.600" stroke="#555" /><circle cx="20" cy="20" r="7.800" fill="#9cc9f5" stroke="#2c7fb8" strokeWidth="1.400" /><path d="M25.500 25.500l3 3.500" stroke="#2c7fb8" strokeWidth="2" /></Svg>
              <span>论文</span><span>查重</span>
            </BigButton>
          </GroupBody>
          <GroupLabel><span>论文</span></GroupLabel>
        </Group>
        <Group $w={62}>
          <GroupBody>
            <BigButton>
              <Svg w={30} h={30} strokeWidth="3.600"><circle cx="8" cy="18" r="4.800" stroke="#3fc3f7" /><path d="M17.500 14.500a4.800 4.800 0 1 1 1 7l-7-7" stroke="#1da1f2" /><path d="M9.200 10a5.800 5.800 0 0 1 11.600 0" stroke="#3fc3f7" /><path d="M9.500 10a5.500 5.500 0 0 0 11 0" stroke="#f5506e" /></Svg>
              <span>保存到</span><span>百度网盘</span>
            </BigButton>
          </GroupBody>
          <GroupLabel><span>保存</span></GroupLabel>
        </Group>
        <Collapse aria-label="折叠功能区"><Svg w={10} h={6}><path d="M1 5l4-4 4 4" strokeWidth="2" stroke="#777" /></Svg></Collapse>
      </Ribbon>

      <QuickBar>
        <QuickButton $w={48} aria-label="保存"><Svg w={14} h={14} stroke="none"><path d="M0 0h14v14H0z" fill="#8250ac" /><path d="M2 1h10v6H2zM4 10h6v4H4z" fill="#f4eef9" /><path d="M5 11h2v3H5z" fill="#8250ac" /></Svg></QuickButton>
        <QuickButton $w={52} $split aria-label="撤消"><Svg w={16} h={14} stroke="#b0b0b0" strokeWidth="2"><path d="M2 5h7.500a4 4 0 0 1 0 8M6 1L2 5l4 4" /></Svg><Caret c="#bbb" /></QuickButton>
        <QuickButton $w={54} aria-label="重复"><Svg w={14} h={14} stroke="#b0b0b0" strokeWidth="2"><path d="M4 2.200A5.700 5.700 0 1 0 10.500 2.500M8 6.500V1.500h5" /></Svg></QuickButton>
        <QuickButton $w={54} aria-label="并排查看"><Svg w={17} h={12}><path d="M.5.5h6v10h-6zM9.500.5h6v10h-6z" fill="#fff" /><path d="M2 3.500h3M2 5.500h3M2 7.500h3M11 3.500h3M11 5.500h3M11 7.500h3" /></Svg></QuickButton>
        <QuickButton $w={53} aria-label="超链接"><Svg w={16} h={17}><circle cx="6.500" cy="6" r="5.500" /><path d="M1 6h11M2 3h9M6.500.5v11M4 1.500c-1.500 3-1.500 6 0 9M9 1.500c1.500 3 1.500 6 0 9" strokeWidth=".9" /><g stroke={B} strokeWidth="1.800" fill="#e6e6e6"><rect x="2" y="10" width="7" height="5" rx="2.500" /><rect x="8" y="11" width="7" height="5" rx="2.500" /></g></Svg></QuickButton>
        <QuickButton $w={53} aria-label="打印预览"><Svg w={15} h={17}><path d="M.5.5h9l3 3V16.500H.5z" fill="#fff" /><circle cx="7" cy="9" r="3.700" strokeWidth="1.500" /><path d="M10 12l4 4" strokeWidth="2" /></Svg></QuickButton>
        <QuickButton $w={53} aria-label="附件"><Svg w={17} h={16}><path d="M3 4.500H.5v10h15v-10H11" fill="#fff" /><path d="M4 4v4a3 3 0 0 0 6 0V3a2 2 0 0 0-4 0v5a1 1 0 0 0 2 0V4" /><path d="M12 6h2v2h-2z" fill={B} stroke="none" /></Svg></QuickButton>
        <QuickButton $w={53} aria-label="邮件合并"><Svg w={17} h={16}><path d="M7.500.5h8v7h-8zM9 3h5M9 5h5" fill="#fff" /><path d="M.5 7.500h4l3 3v5h-7z" fill="#fff" /><path d="M2 5c0-2 1-3 4-3M4.500 0l2 2-2 2" stroke={B} /></Svg></QuickButton>
        <QuickButton $w={48} aria-label="自定义快速访问工具栏"><Svg w={6} h={6} stroke="#f6f6f6"><path d="M0 .5h6" /><path d="M0 3h6L3 6z" fill="#f6f6f6" stroke="none" /></Svg></QuickButton>
      </QuickBar>

      <Workspace>
        <NavPane>
          <NavHead>
            <h2>导航</h2>
            <button aria-label="任务窗格选项"><Svg w={9} h={5} stroke="none"><path d="M0 0h9L4.500 5z" fill="#666" /></Svg></button>
            <button aria-label="关闭导航"><Svg w={10} h={10}><path d="M1 1l8 8M9 1L1 9" strokeWidth="2" /></Svg></button>
          </NavHead>
          <SearchBox>
            <input aria-label="搜索文档" placeholder="搜索文档" />
            <button aria-label="搜索"><Magnifier c={BLUE} /></button>
            <button aria-label="搜索选项"><Caret /></button>
          </SearchBox>
          <NavTabs><NavTab>标题</NavTab><NavTab $on>页面</NavTab><NavTab>结果</NavTab></NavTabs>
          <ThumbList>
            <Thumb><ThumbPage $cut><Svg w={113} h={12}><path d="M54 3.500h6" stroke="#999" /></Svg></ThumbPage>2</Thumb>
            <Thumb $on><ThumbPage $on><Mini3 /></ThumbPage>3</Thumb>
            <Thumb><ThumbPage><Mini4 /></ThumbPage>4</Thumb>
            <Thumb><ThumbPage><Mini5 /></ThumbPage>5</Thumb>
          </ThumbList>
        </NavPane>
        <RulerColumn>
          <TabStop aria-label="制表符"><Svg w={8} h={8}><path d="M1 0v7h7" strokeWidth="2" /></Svg></TabStop>
          <RulerClip><VRuler /></RulerClip>
        </RulerColumn>
        <Canvas>
          <HRuler />
          <Page>
            <Crop $x="left" $y="top" /><Crop $x="right" $y="top" /><Crop $x="left" $y="bottom" /><Crop $x="right" $y="bottom" />
            <Para>
              <Line $indent={22} $full><Red>视频</Red>提供了功能强大的方法帮助您证明您的观点。当您单击联机<Red>视频</Red>时，</Line>
              <Line $full>可以在想要添加的<Red>视频</Red>的嵌入代码中进行粘贴。您也可以键入一个关键字以联</Line>
              <Line>机搜索最适合您的文档的<Red>视频</Red>。</Line>
            </Para>
            <Figure>
              <Chart />
              <figcaption>图表 1</figcaption>
            </Figure>
            <Para>
              <Line $indent={26} $full>为使您的文档具有专业外观，<Word /><Mark>①</Mark><Blank $narrow />提供了页眉、页脚、封面和文本</Line>
              <Line>框设计，这些设计可互为补充。</Line>
            </Para>
            <Para>
              <Line $indent={26} $full>例如<Mark $dark>[1]</Mark>，您可以添加匹配的封面、页眉和提要栏。单击“插入”，然后从不</Line>
              <Line>同库中选择所需元素。</Line>
            </Para>
            <Para $color="#f00">
              <Line $indent={26} $full>主题和样式也有助于文档保持协<TextCaret />调。当您单击设计并选择新的主题时，图</Line>
              <Line $full>片、图表或<Blank /><Mono>SmartArt</Mono><Blank />图形将会更改以匹配新的主题。当应用样式时，您的</Line>
              <Line>标题会进行更改以匹配新的主题。</Line>
            </Para>
            <Para>
              <Line $indent={26} $full>使用在需要位置出现的新按钮在<Blank /><Word />中保存时间。若要更改图片适</Line>
              <Line $full>应文档的方式，请单击该图片，图片旁边将会显示布局选项按钮。当处理表格</Line>
              <Line>时，单击要添加行或列的位置，然后单击加号。<Mark>②</Mark></Line>
            </Para>
            <Para $color={L}>
              <Line $indent={26} $full>在新的阅读视图中阅读更加容易。可以折叠文档某些部分并关注所需文本。</Line>
              <Line $full>如果在达到结尾处之前需要停止读取，<Word /><Blank />会记住您的停止位置<Blank /><Cell>-</Cell></Line>
              <Line>即使在另一个设备上。</Line>
            </Para>
            <Footnotes>
              <p><Mark>①</Mark>office 系列软件中的一款，用于处理文字。</p>
              <p><Mark>[1]</Mark>举例文字内容</p>
              <p><Mark>②</Mark>举例脚注内容。</p>
            </Footnotes>
            <Pointer width="9" height="16" viewBox="0 0 9 16" fill="none" stroke="#000" aria-hidden="true"><path d="M1 .5h7M4.500 1v14M1 15.500h7" /></Pointer>
            <Tooltip role="tooltip">图例</Tooltip>
          </Page>
        </Canvas>
        <ScrollBar>
          <button aria-label="向上滚动"><Svg w={7} h={4} stroke="none"><path d="M0 4h7L3.500 0z" fill={G} /></Svg></button>
          <ScrollSpace $grow={137} />
          <ScrollThumb />
          <ScrollSpace $grow={601} />
          <button aria-label="向下滚动"><Svg w={7} h={4} stroke="none"><path d="M0 0h7L3.500 4z" fill={G} /></Svg></button>
        </ScrollBar>
      </Workspace>

      <StatusBar>
        <StatusItems>
          <span>页面: 3</span><span>节: 4</span><span>第 3 页，共 12 页</span><span>2862 个字</span><span>中文(中国)</span><span>修订: 关闭</span><span>插入</span>
          <Svg w={13} h={13}><path d="M4.500 3.500h8v9h-10v-6" /><path d="M4 6.500h7M4 8.500h7M4 10.500h7" strokeDasharray="2 1" /><circle cx="3" cy="3" r="3" fill={G} stroke="none" /></Svg>
        </StatusItems>
        <ViewButton aria-label="阅读视图"><Svg w={14} h={13}><path d="M7 2C5 .5 3 .5.5 1v10c2.500-.5 4.500-.5 6.500 1 2-1.500 4-1.500 6.500-1V1C11 .5 9 .5 7 2zv10M2 4h3M2 6h3M2 8h3M9 4h3M9 6h3M9 8h3" /></Svg></ViewButton>
        <ViewButton $on aria-label="页面视图"><Svg w={14} h={13}><path d="M.5.5h13v12H.5zM2 3.500h10M2 5.500h10M2 7.500h10M2 9.500h10" /></Svg></ViewButton>
        <ViewButton aria-label="Web 版式视图"><Svg w={14} h={13}><path d="M11.500 4V.5H.5v11h5M2 3.500h8M2 5.500h6M2 7.500h4" /><circle cx="10" cy="9" r="3.500" fill="#999" /><path d="M8 8l2 1 1 2M10 6l2 1" stroke="#fff" /></Svg></ViewButton>
        <ZoomStep $gap={3} aria-label="缩小"><Svg w={6} h={6}><path d="M0 3h6" strokeWidth="2" /></Svg></ZoomStep>
        <ZoomRange type="range" min={0} max={100} defaultValue={40} aria-label="缩放" />
        <ZoomStep $gap={6} aria-label="放大"><Svg w={8} h={8}><path d="M0 4h8M4 0v8" strokeWidth="2" /></Svg></ZoomStep>
        <ZoomValue>80%</ZoomValue>
      </StatusBar>

      <Watermark>
        <svg width="44" height="42" viewBox="0 0 44 42" aria-hidden="true">
          <defs>
            <linearGradient id="wb" x1="0" y1="0" x2="1" y2="0"><stop offset="0" stopColor="#2f7fd0" /><stop offset="1" stopColor="#67c3ee" /></linearGradient>
            <linearGradient id="wg" x1="0" y1="1" x2="1" y2="0"><stop offset="0" stopColor="#f2c230" /><stop offset="1" stopColor="#44b05c" /></linearGradient>
          </defs>
          <path d="M43 1C24 1 2 6 1 22c0 8 8 12 18 9C9 31 6 26 8 20 11 10 26 5 43 1z" fill="url(#wb)" />
          <path d="M13 29c-2-9 8-18 20-14-9 0-14 4-14 13z" fill="url(#wb)" />
          <path d="M27 15c10-3 17 3 14 12C37 37 20 42 4 39c12-1 24-5 27-12 2-5 0-9-4-12z" fill="url(#wg)" />
        </svg>
        <div><strong>极光下载站</strong><em>www.xz7.com</em></div>
      </Watermark>
      <Ime>
        CH
        <Svg w={12} h={13} stroke="#444"><path d="M4 1c6 1 8 7 3 10-2 1-5 1-6 0 4-1 6-5 3-10z" /></Svg>
        简
      </Ime>
    </Shell>
  );
}
